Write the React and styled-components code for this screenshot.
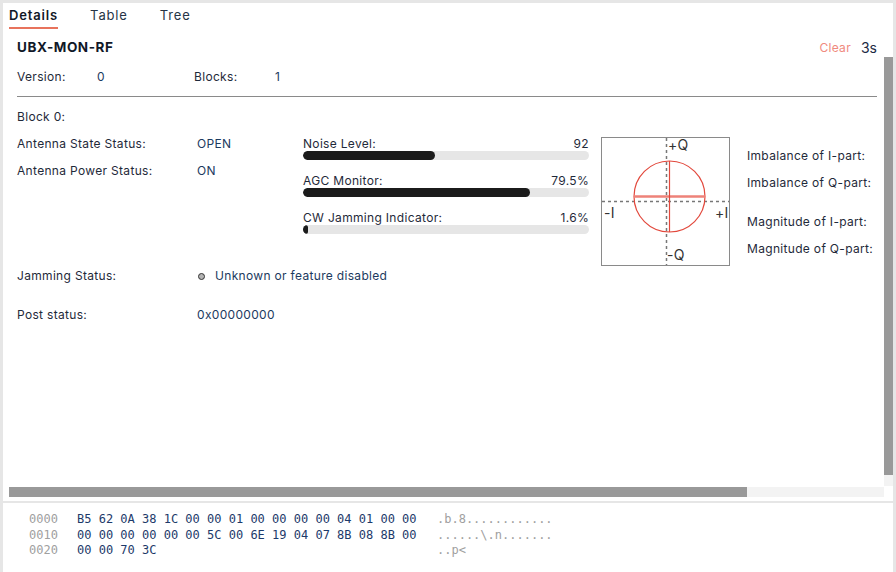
import React from 'react'
import styled, { createGlobalStyle } from 'styled-components'

const GlobalStyle = createGlobalStyle`
  body {
    margin: 0;
    background: #fff;
    font-family: Inter, "Noto Sans", sans-serif;
    color: #1f2937;
  }
`

const bars = [
  { label: 'Noise Level:', value: '92', pct: 46 },
  { label: 'AGC Monitor:', value: '79.5%', pct: 79.5 },
  { label: 'CW Jamming Indicator:', value: '1.6%', pct: 1.6 },
]

const hexRows = [
  { off: '0000', bytes: 'B5 62 0A 38 1C 00 00 01 00 00 00 00 04 01 00 00', ascii: '.b.8............' },
  { off: '0010', bytes: '00 00 00 00 00 00 5C 00 6E 19 04 07 8B 08 8B 00', ascii: '......\\.n.......' },
  { off: '0020', bytes: '00 00 70 3C', ascii: '..p<' },
]

const App = () => {
  return (
    <Frame>
      <GlobalStyle />
      <Panel>
        <Tabs>
          <Tab $active>Details</Tab>
          <Tab>Table</Tab>
          <Tab>Tree</Tab>
        </Tabs>
        <Header>
          <Title>UBX-MON-RF</Title>
          <Controls>
            <ClearBtn>Clear</ClearBtn>
            <Age>3s</Age>
          </Controls>
        </Header>
        <ScrollArea>
          <Content>
            <SummaryRow>
              <Label>Version:</Label>
              <Value>0</Value>
              <Label>Blocks:</Label>
              <Value>1</Value>
            </SummaryRow>
            <Divider />
            <BlockTitle>Block 0:</BlockTitle>
            <BlockTop>
              <InfoTable>
                <Label>Antenna State Status:</Label>
                <Value>OPEN</Value>
                <Label>Antenna Power Status:</Label>
                <Value>ON</Value>
              </InfoTable>
              <BarList>
                {bars.map((b) => (
                  <BarItem key={b.label}>
                    <BarHead>
                      <span>{b.label}</span>
                      <span>{b.value}</span>
                    </BarHead>
                    <Track>
                      <Fill style={{ width: `${b.pct}%` }} />
                    </Track>
                  </BarItem>
                ))}
              </BarList>
              <IQBox>
                <svg width="127" height="127" viewBox="0 0 127 127">
                  <line x1="64.5" y1="0" x2="64.5" y2="127" stroke="#777" strokeWidth="1.5" strokeDasharray="3 3" />
                  <line x1="0" y1="63.5" x2="127" y2="63.5" stroke="#777" strokeWidth="1.5" strokeDasharray="3 3" />
                  <circle cx="67.5" cy="58.5" r="35.5" fill="none" stroke="#e2483c" strokeWidth="1.2" />
                  <line x1="32" y1="58.5" x2="103" y2="58.5" stroke="#ee8279" strokeWidth="2.5" />
                  <line x1="67.5" y1="23" x2="67.5" y2="94" stroke="#e2483c" strokeWidth="1.2" />
                  <IQText x="66" y="12">+Q</IQText>
                  <IQText x="65" y="122">-Q</IQText>
                  <IQText x="2" y="80">-I</IQText>
                  <IQText x="113" y="80">+I</IQText>
                </svg>
              </IQBox>
              <SideLabels>
                <SideLabel>Imbalance of I-part:</SideLabel>
                <SideLabel>Imbalance of Q-part:</SideLabel>
                <SideLabel $gap>Magnitude of I-part:</SideLabel>
                <SideLabel>Magnitude of Q-part:</SideLabel>
              </SideLabels>
            </BlockTop>
            <StatusTable>
              <Label>Jamming Status:</Label>
              <Value>
                <Dot />
                Unknown or feature disabled
              </Value>
              <Label>Post status:</Label>
              <Value>0x00000000</Value>
            </StatusTable>
          </Content>
          <VTrack>
            <VThumb />
          </VTrack>
          <HTrack>
            <HThumb />
          </HTrack>
          <Corner />
        </ScrollArea>
      </Panel>
      <Separator />
      <HexDump>
        {hexRows.map((r) => (
          <HexRow key={r.off}>
            <Offset>{r.off}</Offset>
            <Bytes>{r.bytes}</Bytes>
            <Ascii>{r.ascii}</Ascii>
          </HexRow>
        ))}
      </HexDump>
      <Grip />
    </Frame>
  )
}

const Frame = styled.div`
  position: relative;
  width: 896px;
  height: 572px;
  box-sizing: border-box;
  border-top: 3px solid #e6e6e6;
  border-left: 3px solid #e6e6e6;
  border-right: 3px solid #e6e6e6;
  display: flex;
  flex-direction: column;
  overflow: hidden;
`

const Panel = styled.div`
  padding-left: 6px;
  display: flex;
  flex-direction: column;
`

const Tabs = styled.div`
  display: flex;
  gap: 32px;
  height: 26px;
`

const Tab = styled.div`
  font-size: 13px;
  line-height: 24px;
  letter-spacing: 0.85px;
  font-weight: ${(p) => (p.$active ? 600 : 400)};
  color: ${(p) => (p.$active ? '#111827' : '#263445')};
  border-bottom: 2px solid ${(p) => (p.$active ? '#e8735c' : 'transparent')};
`

const Header = styled.div`
  display: flex;
  justify-content: space-between;
  align-items: center;
  padding: 8px 16px 0 8px;
  height: 20px;
`

const Title = styled.div`
  font-size: 13.5px;
  font-weight: 700;
  letter-spacing: 0.55px;
  color: #111827;
  line-height: 20px;
`

const Controls = styled.div`
  display: flex;
  align-items: center;
  gap: 10px;
`

const ClearBtn = styled.span`
  font-size: 12px;
  letter-spacing: 0.3px;
  color: #f08a7e;
`

const Age = styled.span`
  font-size: 14px;
  color: #1c2a44;
`

const ScrollArea = styled.div`
  display: grid;
  grid-template-columns: 875px 9px;
  grid-template-rows: 430px 10px;
`

const Content = styled.div`
  overflow: hidden;
  padding: 12px 7px 0 8px;
  font-size: 12px;
  letter-spacing: 0.32px;
  line-height: 16px;
`

const SummaryRow = styled.div`
  display: grid;
  grid-template-columns: 80px 97px 81px auto;
`

const Label = styled.span`
  color: #1f2a3a;
`

const Value = styled.span`
  color: #1c3a60;
  display: flex;
  align-items: center;
`

const Divider = styled.hr`
  border: none;
  border-top: 1px solid #8a8a8a;
  margin: 11px 0 0;
`

const BlockTitle = styled.div`
  margin-top: 12px;
  color: #1f2a3a;
`

const BlockTop = styled.div`
  display: flex;
  align-items: flex-start;
  margin-top: 11px;
`

const InfoTable = styled.div`
  display: grid;
  grid-template-columns: 180px auto;
  row-gap: 11px;
  width: 286px;
`

const BarList = styled.div`
  width: 286px;
  display: flex;
  flex-direction: column;
`

const BarItem = styled.div`
  height: 37px;
`

const BarHead = styled.div`
  display: flex;
  justify-content: space-between;
  color: #1f2a3a;
  line-height: 15px;
`

const Track = styled.div`
  height: 9px;
  border-radius: 5px;
  background: #e6e6e6;
  overflow: hidden;
`

const Fill = styled.div`
  height: 100%;
  min-width: 4px;
  border-radius: 5px;
  background: #1b1b1b;
`

const IQBox = styled.div`
  margin: 1px 0 0 12px;
  width: 127px;
  height: 127px;
  border: 1px solid #8a8a8a;
  svg {
    display: block;
    overflow: visible;
  }
`

const IQText = styled.text`
  font-family: Inter, "Noto Sans", sans-serif;
  font-size: 14px;
  fill: #333;
`

const SideLabels = styled.div`
  margin-left: 17px;
  padding-top: 12px;
  display: flex;
  flex-direction: column;
  gap: 11px;
`

const SideLabel = styled.div`
  color: #1f2a3a;
  white-space: nowrap;
  margin-top: ${(p) => (p.$gap ? '12px' : '0')};
`

const StatusTable = styled.div`
  display: grid;
  grid-template-columns: 180px auto;
  row-gap: 23px;
  margin-top: 2px;
`

const Dot = styled.span`
  width: 5px;
  height: 5px;
  border-radius: 50%;
  background: #b3b3b3;
  border: 1px solid #333;
  margin: 0 10px 0 1px;
`

const VTrack = styled.div`
  background: #f3f3f3;
  height: 429px;
`

const VThumb = styled.div`
  height: 418px;
  background: #999;
`

const HTrack = styled.div`
  background: #f3f3f3;
`

const HThumb = styled.div`
  width: 738px;
  height: 100%;
  background: #999;
`

const Corner = styled.div`
  background: #fff;
`

const Separator = styled.div`
  margin-top: 4px;
  height: 2px;
  background: #e6e6e6;
`

const HexDump = styled.div`
  padding: 9px 0 0 26px;
  font-family: "DejaVu Sans Mono", monospace;
  font-size: 12px;
  line-height: 15.5px;
`

const HexRow = styled.div`
  display: grid;
  grid-template-columns: 48px 360px auto;
  white-space: pre;
`

const Offset = styled.span`
  color: #a0a0a0;
`

const Bytes = styled.span`
  color: #1d3a6a;
`

const Ascii = styled.span`
  color: #a0a0a0;
`

const Grip = styled.div`
  position: absolute;
  right: -3px;
  top: 456px;
  width: 3px;
  height: 20px;
  background: #222;
`

export default App
